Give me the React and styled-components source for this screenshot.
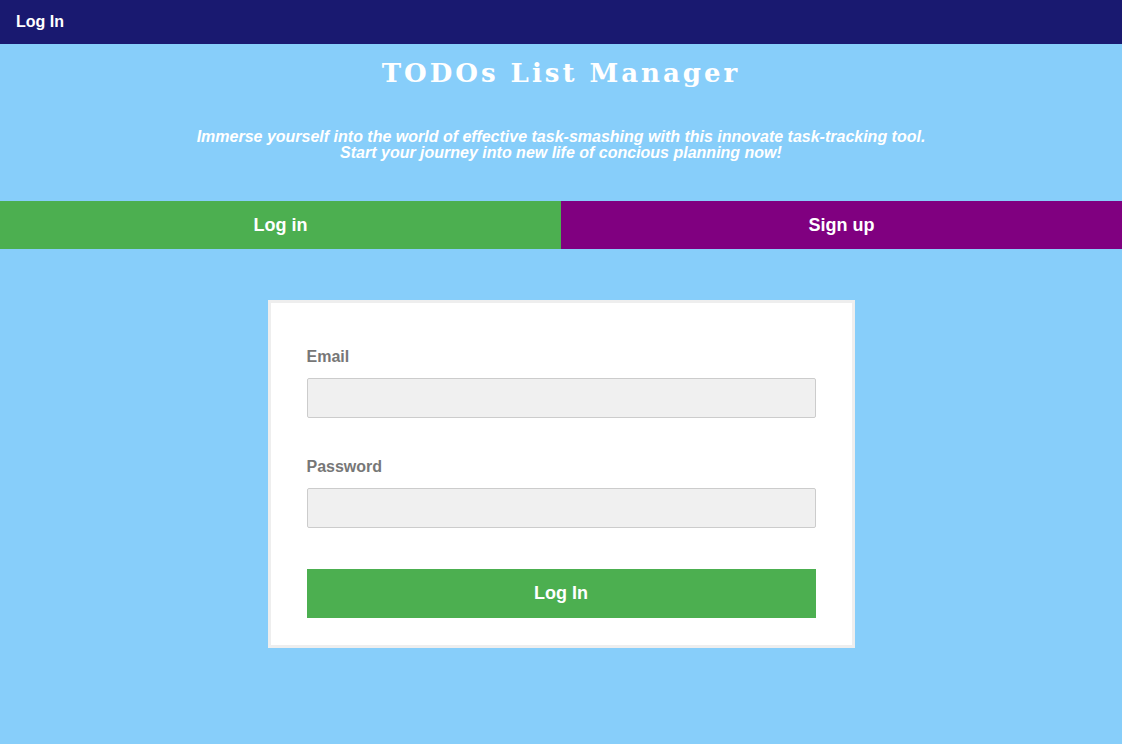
import styled, { createGlobalStyle } from "styled-components";

const GlobalStyle = createGlobalStyle`
  html, body {
    margin: 0;
    padding: 0;
    background: #87cefa;
    font-family: "Liberation Sans", Arial, sans-serif;
  }
`;

const Page = styled.div`
  min-height: 744px;
  background: #87cefa;
`;

const TopBar = styled.header`
  height: 44px;
  background: #191970;
  display: flex;
  align-items: center;
  padding: 0 16px;
  color: #fff;
  font-weight: bold;
  font-size: 16px;
`;

const Hero = styled.section`
  display: flex;
  flex-direction: column;
  align-items: center;
  padding-top: 13px;
  padding-bottom: 40px;
`;

const Title = styled.h1`
  margin: 0;
  font-family: "DejaVu Serif", "Liberation Serif", serif;
  font-size: 26px;
  line-height: 32px;
  font-weight: bold;
  letter-spacing: 3px;
  color: #fff;
`;

const Tagline = styled.p`
  margin: 40px 0 0;
  text-align: center;
  font-style: italic;
  font-weight: bold;
  font-size: 16px;
  line-height: 16px;
  color: #fff;
`;

const Tabs = styled.nav`
  display: grid;
  grid-template-columns: 1fr 1fr;
`;

const Tab = styled.button`
  height: 48px;
  border: none;
  background: ${(p) => p.$bg};
  color: #fff;
  font-family: inherit;
  font-size: 18px;
  font-weight: bold;
  cursor: pointer;
`;

const Main = styled.main`
  display: flex;
  justify-content: center;
  padding-top: 51px;
`;

const Card = styled.form`
  width: 509px;
  background: #fff;
  border: 3px solid #eee;
  padding: 35px 36px 27px;
  display: flex;
  flex-direction: column;
`;

const Field = styled.div`
  display: flex;
  flex-direction: column;
  margin-top: 10px;
  margin-bottom: 30px;
`;

const Label = styled.label`
  color: #777;
  font-weight: bold;
  font-size: 16px;
  margin-bottom: 12px;
`;

const Input = styled.input`
  height: 40px;
  box-sizing: border-box;
  background: #f0f0f0;
  border: 1px solid #ccc;
  border-radius: 2px;
  padding: 0 10px;
  font-family: inherit;
  font-size: 16px;
`;

const Submit = styled.button`
  height: 49px;
  margin-top: 11px;
  border: none;
  background: #4caf50;
  color: #fff;
  font-family: inherit;
  font-size: 18px;
  font-weight: bold;
  cursor: pointer;
`;

export default function App() {
  return (
    <Page>
      <GlobalStyle />
      <TopBar>Log In</TopBar>
      <Hero>
        <Title>TODOs List Manager</Title>
        <Tagline>
          Immerse yourself into the world of effective task-smashing with this
          innovate task-tracking tool.
          <br />
          Start your journey into new life of concious planning now!
        </Tagline>
      </Hero>
      <Tabs>
        <Tab $bg="#4caf50">Log in</Tab>
        <Tab $bg="#800080">Sign up</Tab>
      </Tabs>
      <Main>
        <Card onSubmit={(e) => e.preventDefault()}>
          <Field>
            <Label htmlFor="email">Email</Label>
            <Input id="email" type="email" />
          </Field>
          <Field>
            <Label htmlFor="password">Password</Label>
            <Input id="password" type="password" />
          </Field>
          <Submit type="submit">Log In</Submit>
        </Card>
      </Main>
    </Page>
  );
}
